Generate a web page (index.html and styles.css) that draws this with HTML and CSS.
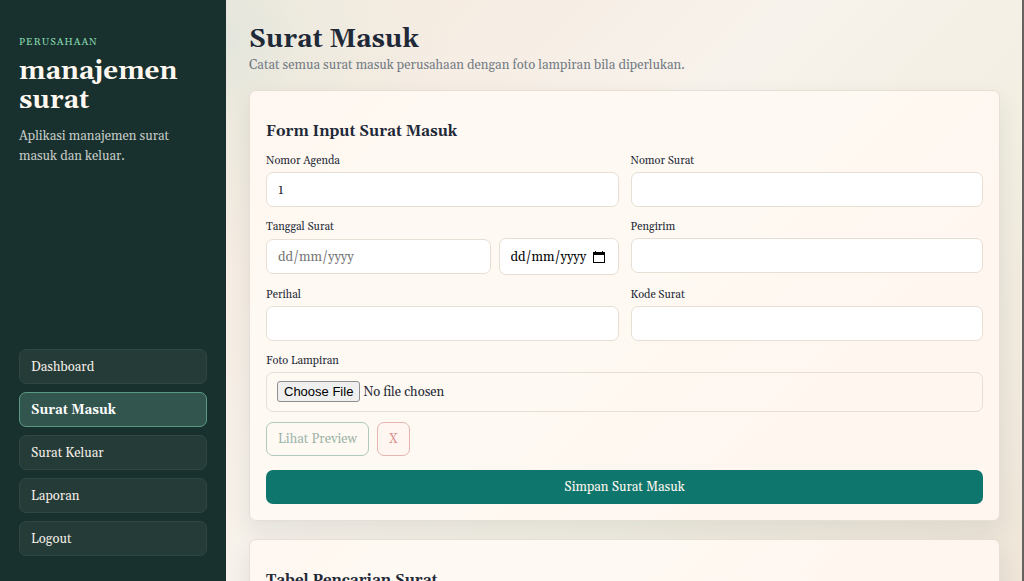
FILE: index.html
```html
<!DOCTYPE html>
<html lang="id">
<head>
  <meta charset="UTF-8">
  <meta name="viewport" content="width=device-width, initial-scale=1.0">
  <title>Surat Masuk</title>
  <link rel="stylesheet" href="styles.css">
</head>
<body>
  <div class="app">
    <aside class="sidebar">
      <div class="brand">
        <p class="eyebrow">PERUSAHAAN</p>
        <h1>manajemen surat</h1>
        <p class="brand-text">Aplikasi manajemen surat masuk dan keluar.</p>
      </div>
      <nav class="menu">
        <a href="#dashboard">Dashboard</a>
        <a href="#surat-masuk" class="active">Surat Masuk</a>
        <a href="#surat-keluar">Surat Keluar</a>
        <a href="#laporan">Laporan</a>
        <a href="#logout">Logout</a>
      </nav>
    </aside>

    <main class="content">
      <header class="page-header">
        <h2>Surat Masuk</h2>
        <p>Catat semua surat masuk perusahaan dengan foto lampiran bila diperlukan.</p>
      </header>

      <section class="card">
        <h3>Form Input Surat Masuk</h3>
        <form class="form-grid">
          <div class="field">
            <label for="agenda">Nomor Agenda</label>
            <input type="text" id="agenda" value="1">
          </div>
          <div class="field">
            <label for="nomor">Nomor Surat</label>
            <input type="text" id="nomor">
          </div>
          <div class="field">
            <label for="tanggal">Tanggal Surat</label>
            <div class="date-row">
              <input type="text" id="tanggal" placeholder="dd/mm/yyyy">
              <div class="date-picker">
                <input type="text" placeholder="dd/mm/yyyy" aria-label="Pilih tanggal">
                <button type="button" aria-label="Buka kalender">
                  <svg width="12" height="12" viewBox="0 0 12 12">
                    <path d="M2 0h1v1h6V0h1v1h2v11H0V1h2zM1 4v7h10V4z" fill="#000" fill-rule="evenodd"/>
                  </svg>
                </button>
              </div>
            </div>
          </div>
          <div class="field">
            <label for="pengirim">Pengirim</label>
            <input type="text" id="pengirim">
          </div>
          <div class="field">
            <label for="perihal">Perihal</label>
            <input type="text" id="perihal">
          </div>
          <div class="field">
            <label for="kode">Kode Surat</label>
            <input type="text" id="kode">
          </div>
          <div class="field full">
            <label for="foto">Foto Lampiran</label>
            <input type="file" id="foto">
            <div class="file-actions">
              <button type="button" class="btn-preview" disabled>Lihat Preview</button>
              <button type="button" class="btn-clear" disabled>X</button>
            </div>
          </div>
          <button type="submit" class="btn-submit full">Simpan Surat Masuk</button>
        </form>
      </section>

      <section class="card">
        <h3>Tabel Pencarian Surat</h3>
      </section>
    </main>
  </div>
</body>
</html>
```
FILE: styles.css
```css
* {
  box-sizing: border-box;
}

body {
  margin: 0;
  font-family: Georgia, Gelasio, "Liberation Serif", serif;
  font-size: 13px;
  color: #1f2937;
}

h1, h2, h3, p {
  margin: 0;
}

.app {
  display: grid;
  grid-template-columns: 226px 1fr;
  height: 100vh;
  overflow: hidden;
  border-right: 2px solid #66625f;
}

.sidebar {
  display: flex;
  flex-direction: column;
  justify-content: space-between;
  padding: 35px 19px 25px;
  background: #19312e;
  color: #fff8f0;
}

.eyebrow {
  font-size: 10px;
  line-height: 14px;
  letter-spacing: 1px;
  color: #86d9ae;
}

.brand h1 {
  margin: 8px 0 11px;
  font-size: 26px;
  line-height: 29px;
}

.brand-text {
  line-height: 20px;
  color: #c5cbc7;
}

.menu {
  display: grid;
  gap: 8px;
}

.menu a {
  padding: 9px 11px 7px;
  border: 1px solid #2f4643;
  border-radius: 7px;
  background: #253b38;
  color: #f3eee7;
  line-height: 17px;
  text-decoration: none;
}

.menu a.active {
  border-color: #5b9a82;
  background: #32554d;
  color: #fff;
  font-weight: bold;
}

.content {
  padding: 24px 22px 24px 23px;
  overflow: hidden;
  background:
    radial-gradient(circle at 0 40px, #e3e5dc 0, rgba(236, 234, 222, 0.8) 80px, transparent 230px),
    linear-gradient(135deg, #f6ece2 0%, #f6ece2 15%, #f7f2eb 42%, #f3efe3 65%, #efe5d9 100%);
}

.page-header {
  margin-bottom: 15px;
}

.page-header h2 {
  font-size: 26px;
  line-height: 31px;
}

.page-header p {
  line-height: 20px;
  color: #747b84;
}

.card {
  margin-bottom: 18px;
  padding: 31px 16px 16px;
  border: 1px solid #e7dfd5;
  border-radius: 7px;
  background: linear-gradient(135deg, #fff7f1 0%, #fef9f2 20%, #fef9f2 50%, #fff6f0 75%);
  box-shadow: 0 10px 25px rgba(25, 49, 46, 0.09);
}

.card h3 {
  margin-bottom: 11px;
  font-size: 15px;
  line-height: 20px;
}

.form-grid {
  display: grid;
  grid-template-columns: 1fr 1fr;
  gap: 12px;
}

.full {
  grid-column: 1 / -1;
}

.field label {
  display: block;
  margin-bottom: 3px;
  font-size: 11px;
  line-height: 16px;
}

input,
button {
  font: inherit;
  color: inherit;
}

input {
  display: block;
  width: 100%;
  height: 35px;
  padding: 0 11px;
  border: 1px solid #e7dfd3;
  border-radius: 7px;
  background: #fff;
}

input::placeholder {
  color: #757575;
  opacity: 1;
}

.date-row {
  display: grid;
  grid-template-columns: 1fr 120px;
  align-items: center;
  gap: 8px;
}

.date-picker {
  display: flex;
  align-items: center;
  height: 37px;
  padding: 0 13px 0 11px;
  border: 1px solid #e7dfd3;
  border-radius: 7px;
  background: #fff;
}

.date-picker input {
  flex: 1;
  min-width: 0;
  padding: 0;
  border: 0;
  height: 20px;
}

.date-picker input::placeholder {
  color: #000;
}

.date-picker button {
  display: flex;
  padding: 0;
  border: 0;
  background: none;
}

input[type="file"] {
  height: 40px;
  padding: 8px 10px;
  background: none;
}

input[type="file"]::file-selector-button {
  height: 21px;
  margin-right: 3px;
  padding: 1px 6px;
  border: 1px solid #8f8f8f;
  border-radius: 3px;
  background: #efefef;
  color: #000;
  font-family: "Liberation Sans", Arial, sans-serif;
  font-size: 13px;
}

.file-actions {
  display: flex;
  gap: 8px;
  margin: 10px 0 2px;
}

.file-actions button {
  height: 34px;
  padding: 0 11px;
  border: 1px solid #b0c8bd;
  border-radius: 7px;
  background: none;
  color: #9db5aa;
}

.file-actions .btn-clear {
  border-color: #e6b5b1;
  background: #fff5f1;
  color: #d99691;
}

.btn-submit {
  height: 34px;
  border: 0;
  border-radius: 7px;
  background: #0f766e;
  color: #fff8f0;
}
```
